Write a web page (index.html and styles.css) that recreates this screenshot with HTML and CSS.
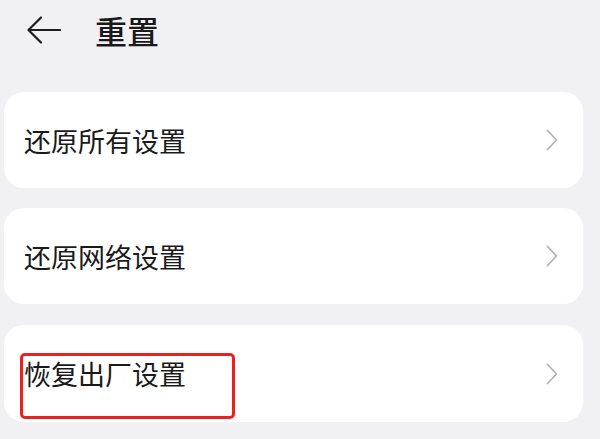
FILE: index.html
```html
<!DOCTYPE html>
<html lang="zh-CN">
<head>
<meta charset="utf-8">
<title>重置</title>
<link rel="stylesheet" href="styles.css">
</head>
<body>
<div class="header">
  <svg class="back" width="34" height="28" viewBox="0 0 34 28">
    <path d="M33 14 H2 M14 1.5 L1.5 14 L14 26.5" fill="none" stroke="#1c1c1c" stroke-width="2.2" stroke-linecap="round" stroke-linejoin="round"/>
  </svg>
  <span class="title">重置</span>
</div>
<div class="list">
  <div class="card">
    <span class="label">还原所有设置</span>
    <svg class="chev" width="12" height="22" viewBox="0 0 12 22"><path d="M1.5 1.5 L10.5 11 L1.5 20.5" fill="none" stroke="#b3b3b3" stroke-width="1.8" stroke-linecap="round" stroke-linejoin="round"/></svg>
  </div>
  <div class="card">
    <span class="label">还原网络设置</span>
    <svg class="chev" width="12" height="22" viewBox="0 0 12 22"><path d="M1.5 1.5 L10.5 11 L1.5 20.5" fill="none" stroke="#b3b3b3" stroke-width="1.8" stroke-linecap="round" stroke-linejoin="round"/></svg>
  </div>
  <div class="card card-last">
    <span class="label">恢复出厂设置</span>
    <svg class="chev" width="12" height="22" viewBox="0 0 12 22"><path d="M1.5 1.5 L10.5 11 L1.5 20.5" fill="none" stroke="#b3b3b3" stroke-width="1.8" stroke-linecap="round" stroke-linejoin="round"/></svg>
    <div class="highlight"></div>
  </div>
</div>
</body>
</html>
```
FILE: styles.css
```css
html, body {
  margin: 0;
  padding: 0;
}
body {
  background: #f1f1f3;
  font-family: "Noto Sans CJK SC", "Noto Sans", sans-serif;
  color: #1a1a1a;
  width: 600px;
  height: 439px;
  overflow: hidden;
}
.header {
  height: 60px;
  display: flex;
  align-items: center;
  padding-left: 27px;
}
.back {
  display: block;
  flex: none;
}
.title {
  margin-left: 34px;
  font-size: 32px;
  font-weight: 500;
  line-height: 1;
  color: #1a1a1a;
}
.list {
  display: flex;
  flex-direction: column;
  gap: 20px;
  padding: 32px 17px 0 4px;
}
.card {
  position: relative;
  height: 96px;
  background: #ffffff;
  border-radius: 20px;
  display: flex;
  align-items: center;
  justify-content: space-between;
  padding: 0 25px 0 20px;
}
.card-last {
  height: 97px;
  margin-top: 1px;
}
.label {
  font-size: 27px;
  line-height: 1;
  color: #1a1a1a;
}
.chev {
  display: block;
  flex: none;
}
.highlight {
  position: absolute;
  left: 16px;
  top: 28px;
  width: 215px;
  height: 66px;
  box-sizing: border-box;
  border: 3px solid #e8221f;
  border-radius: 5px;
}
```
